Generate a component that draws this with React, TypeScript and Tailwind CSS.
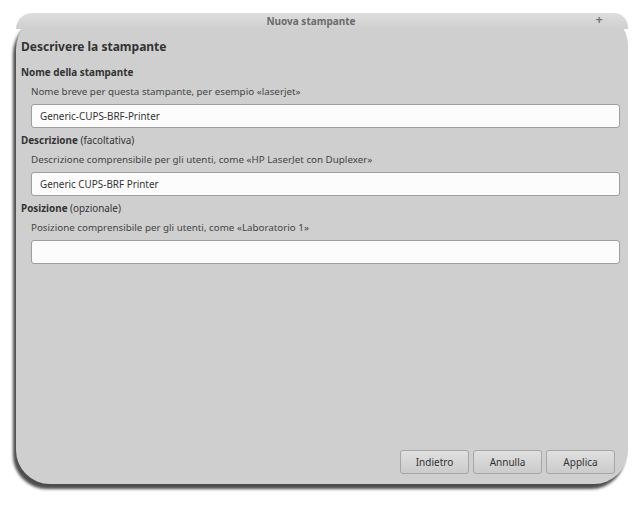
import React from 'react'

const font = { fontFamily: '"Noto Sans", "Open Sans", sans-serif' }

function Field({
  label,
  hint,
  help,
  value,
}: {
  label: string
  hint?: string
  help: string
  value: string
}) {
  return (
    <div className="flex flex-col">
      <div className="h-[18px] text-[9.9px] leading-[18px] text-[#333]">
        <span className="font-bold">{label}</span>
        {hint && <span> {hint}</span>}
      </div>
      <div className="ml-[10px] mt-[1px] h-[20px] text-[9.8px] leading-[20px] text-[#444]">{help}</div>
      <div className="ml-[10px] mr-[8px] mt-[2px] flex h-[24px] items-center rounded-[3px] border border-[#9e9e9e] bg-[#fcfcfc] px-[8px] text-[9.9px] text-[#333]">
        {value}
      </div>
    </div>
  )
}

export default function App() {
  return (
    <div className="h-[510px] w-[635px] bg-white pl-[16px] pt-[13px]" style={font}>
      <div className="flex h-[471px] w-[612px] flex-col rounded-tl-[36px] rounded-tr-[32px] rounded-bl-[34px] rounded-br-[34px] bg-[#cfcfcf] shadow-[-3px_5px_3px_rgba(0,0,0,0.7)]">
        {/* barra del titolo */}
        <div className="relative flex h-[16px] items-center justify-center rounded-tl-[36px] rounded-tr-[32px] bg-gradient-to-b from-[#dedede] to-[#cfcfcf] pr-[22px]">
          <span className="text-[10px] font-bold text-[#6a6a6a]">Nuova stampante</span>
          <span className="absolute right-[25px] top-[-3px] text-[13px] font-bold text-[#777]">+</span>
        </div>

        <div className="flex flex-1 flex-col pl-[5px]">
          <div className="mt-[6px] h-[24px] text-[12px] font-bold leading-[24px] text-[#333]">
            Descrivere la stampante
          </div>
          <div className="mt-[4px] flex flex-col gap-[3px]">
            <Field
              label="Nome della stampante"
              help="Nome breve per questa stampante, per esempio «laserjet»"
              value="Generic-CUPS-BRF-Printer"
            />
            <Field
              label="Descrizione"
              hint="(facoltativa)"
              help="Descrizione comprensibile per gli utenti, come «HP LaserJet con Duplexer»"
              value="Generic CUPS-BRF Printer"
            />
            <Field
              label="Posizione"
              hint="(opzionale)"
              help="Posizione comprensibile per gli utenti, come «Laboratorio 1»"
              value=""
            />
          </div>

          <div className="mt-auto mb-[10px] mr-[13px] flex justify-end gap-[4px]">
            {['Indietro', 'Annulla', 'Applica'].map((b) => (
              <button
                key={b}
                className="h-[24px] w-[69px] rounded-[3px] border border-[#a6a6a6] bg-gradient-to-b from-[#e0e0e0] to-[#cbcbcb] text-[10px] text-[#333]"
              >
                {b}
              </button>
            ))}
          </div>
        </div>
      </div>
    </div>
  )
}
